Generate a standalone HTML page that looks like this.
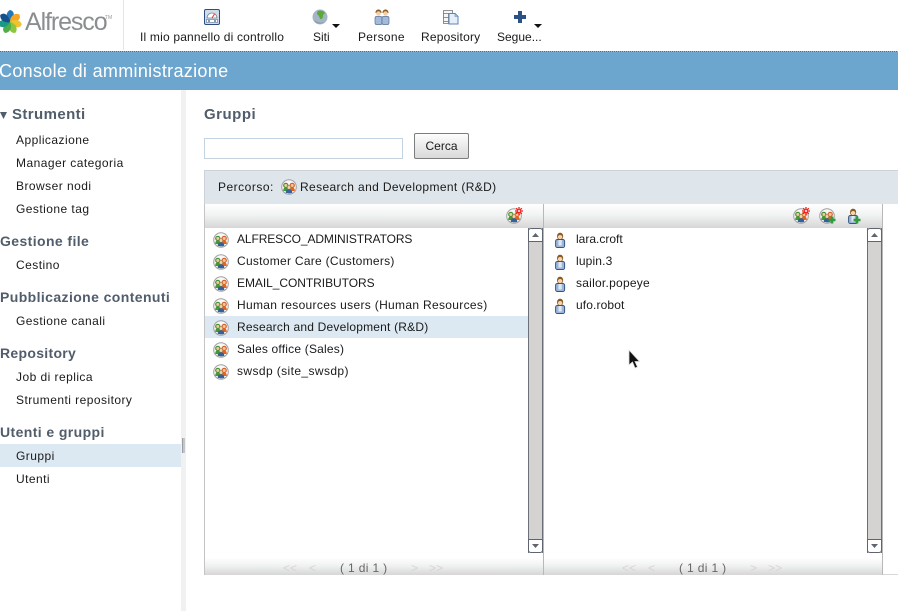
<!DOCTYPE html>
<html><head><meta charset="utf-8">
<style>
html,body{margin:0;padding:0;background:#fff}
body{width:898px;height:611px;overflow:hidden;position:relative;font-family:"Liberation Sans",Arial,sans-serif;font-size:12px;color:#1a1a1a}
.a{position:absolute;white-space:nowrap}
.t{position:absolute;white-space:nowrap;line-height:14px}
.n{letter-spacing:.45px}
.h{position:absolute;white-space:nowrap;font-weight:bold;font-size:14px;line-height:16px;color:#515d6b;left:0;letter-spacing:.4px}
svg{position:absolute;overflow:visible}
.grad{background:linear-gradient(to bottom,#fff 0%,#f2f3f3 45%,#d6d6d6 100%)}
.sb{position:absolute;width:15px;background:#d4d3d1;border-left:1px solid #6b7078;border-right:1px solid #6b7078;box-sizing:border-box}
.sbb{position:absolute;width:15px;height:14px;background:#fff;border:1px solid #5f6570;box-sizing:border-box}
</style></head>
<body>
<svg width="0" height="0" style="position:absolute">
<defs>
<symbol id="grp" viewBox="0 0 16 16">
<circle cx="8" cy="8" r="7.300" fill="#f7f7f7" stroke="#a0a0a0" stroke-width="1"/>
<circle cx="4.800" cy="6.400" r="2.100" fill="#f0c8a0" stroke="#3f8f30" stroke-width="1.100"/>
<circle cx="11.200" cy="6.400" r="2.100" fill="#f0c8a0" stroke="#d9581e" stroke-width="1.100"/>
<path d="M2.200 12c0-2.600 1-3.600 2.600-3.600S7.500 9.400 7.500 12z" fill="#439a32"/>
<path d="M8.500 12c0-2.600 1.100-3.600 2.700-3.600s2.600 1 2.600 3.600z" fill="#e0661f"/>
<circle cx="8" cy="8.500" r="1.800" fill="#f3d2b0" stroke="#a5752f" stroke-width=".7"/>
<path d="M4.700 13.800c0-2.600 1.400-3.400 3.300-3.400s3.300.8 3.300 3.400c-1.900.8-4.700.8-6.600 0z" fill="#33609f"/>
</symbol>
<symbol id="usr" viewBox="0 0 14 16">
<path d="M4 4.800c0-2.700 1.300-4 3.100-4s3.100 1.300 3.100 4z" fill="#8a5a1e"/>
<ellipse cx="7.100" cy="5.100" rx="2.600" ry="2.400" fill="#f4d4b4" stroke="#8a5a1e" stroke-width=".7"/>
<rect x="2.600" y="7.500" width="9" height="8" rx="1.800" fill="#9db6d8" stroke="#36557f" stroke-width="1"/>
<rect x="5.500" y="8" width="3.200" height="5.500" fill="#dfe9f4"/>
</symbol>
<symbol id="star" viewBox="0 0 8 8">
<path d="M4 0v8M0 4h8M1.200 1.200l5.600 5.600M6.800 1.200L1.200 6.800" stroke="#f01c18" stroke-width="1.300" fill="none"/>
<circle cx="4" cy="4" r="1" fill="#fff"/>
</symbol>
<symbol id="plus" viewBox="0 0 8 8">
<path d="M4 .5v7M.5 4h7" stroke="#2f9a3e" stroke-width="2.600" fill="none"/>
</symbol>
</defs>
</svg>

<!-- Header -->
<svg style="left:-2px;top:9px" width="24" height="26" viewBox="0 0 24 26">
<circle cx="12" cy="13" r="5" fill="#dfeee0"/>
<g transform="translate(12 13)">
<path d="M0 0C-5-4-4-10 0-12C5-11 5-5 0 0z" transform="rotate(0)" fill="#2277bb"/>
<path d="M0 0C-5-4-4-10 0-12C5-11 5-5 0 0z" transform="rotate(51)" fill="#f5a623"/>
<path d="M0 0C-5-4-4-10 0-12C5-11 5-5 0 0z" transform="rotate(102)" fill="#f2c12e"/>
<path d="M0 0C-5-4-4-10 0-12C5-11 5-5 0 0z" transform="rotate(153)" fill="#8cc63f"/>
<path d="M0 0C-5-4-4-10 0-12C5-11 5-5 0 0z" transform="rotate(204)" fill="#4fae48"/>
<path d="M0 0C-5-4-4-10 0-12C5-11 5-5 0 0z" transform="rotate(255)" fill="#1a9a86"/>
<path d="M0 0C-5-4-4-10 0-12C5-11 5-5 0 0z" transform="rotate(306)" fill="#14508c"/>
</g>
</svg>
<div class="a" style="left:25px;top:7px;font-size:25px;line-height:30px;color:#8b8e91;letter-spacing:-1.100px">Alfresco</div>
<div class="a" style="left:105px;top:15px;font-size:5px;line-height:6px;color:#999">TM</div>
<div class="a" style="left:123px;top:0;width:1px;height:50px;background:#e6e6e6"></div>

<svg style="left:204px;top:9px" width="16" height="16" viewBox="0 0 16 16">
<rect x=".5" y=".5" width="15" height="15" rx="1.500" fill="#cfdcec" stroke="#2c4d80"/>
<path d="M3 9a5 5 0 0 1 10 0z" fill="#fff" stroke="#7a8794" stroke-width=".8"/>
<path d="M8 9l2.500-4" stroke="#d8402c" stroke-width="1"/>
<rect x="2.500" y="10.500" width="11" height="3" fill="#fff" stroke="#5a7299" stroke-width=".6"/>
<circle cx="5" cy="12" r=".9" fill="#33507e"/><circle cx="11" cy="12" r=".9" fill="#33507e"/>
</svg>
<div class="t" style="left:140px;top:30px;letter-spacing:.19px">Il mio pannello di controllo</div>

<svg style="left:312px;top:9px" width="16" height="16" viewBox="0 0 16 16">
<circle cx="8" cy="8" r="7.500" fill="#a4b5c6"/>
<path d="M6 2c3-1 6 .5 7 2-1 1.500-2 .8-2 3s-1.500 3.500-2.500 3-1-3-2.500-4-1-3 0-4z" fill="#5ca838"/>
<path d="M2 11c3 3 8 4 11 1-3 4-9 3-11-1z" fill="#7b8ca0"/>
</svg>
<div class="t" style="left:313px;top:30px">Siti</div>
<svg style="left:332px;top:24px" width="8" height="4"><path d="M0 0h8L4 4z" fill="#111"/></svg>

<svg style="left:374px;top:9px" width="16" height="16" viewBox="0 0 16 16">
<path d="M1.500 4C1.500 1.500 3 .5 4.500.5S7.500 1.500 7.500 4zM8.500 4c0-2.500 1.500-3.500 3-3.500s3 1 3 3.500z" fill="#8a5a1e"/>
<circle cx="4.500" cy="4.500" r="2.300" fill="#f2cda8"/><circle cx="11.500" cy="4.500" r="2.300" fill="#f2cda8"/>
<rect x="1" y="7.500" width="7" height="8" rx="1.500" fill="#a4bad6" stroke="#526f98" stroke-width=".7"/>
<rect x="8" y="7.500" width="7" height="8" rx="1.500" fill="#a4bad6" stroke="#526f98" stroke-width=".7"/>
</svg>
<div class="t" style="left:358px;top:30px;letter-spacing:.3px">Persone</div>

<svg style="left:443px;top:9px" width="16" height="16" viewBox="0 0 16 16">
<path d="M.5 1.500h9v3h-9zM.5 4.500h5v4h-5zM.5 8.500h5v4h-5zM.5 12.500h5v2h-5z" fill="#f6f6f6" stroke="#6f7376" stroke-width=".8"/>
<path d="M6 4.500h6l3 3v7.500H6z" fill="#e6eef7" stroke="#5d85bb"/>
<path d="M12 4.500v3h3z" fill="#b9cfe8" stroke="#5d85bb" stroke-width=".6"/>
</svg>
<div class="t" style="left:421px;top:30px;letter-spacing:.2px">Repository</div>

<svg style="left:514px;top:11px" width="12" height="12" viewBox="0 0 12 12"><path d="M4 0h4v4h4v4H8v4H4V8H0V4h4z" fill="#2c5184"/></svg>
<div class="t" style="left:497px;top:30px">Segue...</div>
<svg style="left:534px;top:24px" width="8" height="4"><path d="M0 0h8L4 4z" fill="#111"/></svg>

<div class="a" style="left:0;top:51px;width:898px;height:1px;background:repeating-linear-gradient(to right,#5e6a72 0 1px,#a9b4bb 1px 2px)"></div>
<div class="a" style="left:0;top:52px;width:898px;height:38px;background:#6ca5ce"></div>
<div class="a" style="left:-1px;top:60px;font-size:18px;line-height:22px;color:#fff;letter-spacing:.32px">Console di amministrazione</div>

<!-- Sidebar -->
<div class="a" style="left:181px;top:90px;width:5px;height:521px;background:#f1f1f1"></div>
<div class="a" style="left:182px;top:438px;width:3px;height:15px;background:#c4c7ca;border-left:1px solid #9a9ea3;box-sizing:border-box"></div>
<svg style="left:0;top:112px" width="7" height="8"><path d="M0 0h7L3.500 7z" fill="#515d6b"/></svg>
<div class="a" style="left:12px;top:106px;font-weight:bold;font-size:15px;line-height:17px;color:#515d6b;letter-spacing:.4px">Strumenti</div>
<div class="t n" style="left:16px;top:133px">Applicazione</div>
<div class="t n" style="left:16px;top:156px">Manager categoria</div>
<div class="t n" style="left:16px;top:179px">Browser nodi</div>
<div class="t n" style="left:16px;top:202px">Gestione tag</div>
<div class="h" style="top:233px">Gestione file</div>
<div class="t n" style="left:16px;top:258px">Cestino</div>
<div class="h" style="top:289px">Pubblicazione contenuti</div>
<div class="t n" style="left:16px;top:314px">Gestione canali</div>
<div class="h" style="top:345px;letter-spacing:.3px">Repository</div>
<div class="t n" style="left:16px;top:370px">Job di replica</div>
<div class="t n" style="left:16px;top:393px">Strumenti repository</div>
<div class="h" style="top:424px">Utenti e gruppi</div>
<div class="a" style="left:0;top:444px;width:181px;height:23px;background:#dce9f2"></div>
<div class="t n" style="left:16px;top:449px">Gruppi</div>
<div class="t n" style="left:16px;top:472px">Utenti</div>

<!-- Main -->
<div class="a" style="left:204px;top:106px;font-weight:bold;font-size:15px;line-height:18px;color:#515d6b;letter-spacing:.5px">Gruppi</div>
<div class="a" style="left:204px;top:138px;width:199px;height:21px;border:1px solid #c3d3e2;box-sizing:border-box;background:#fff"></div>
<div class="a" style="left:414px;top:133px;width:55px;height:26px;box-sizing:border-box;border:1px solid #7d7d7d;border-radius:2px;background:linear-gradient(to bottom,#fdfdfd,#d9d9d9);text-align:center;line-height:25px">Cerca</div>

<div class="a" style="left:204px;top:170px;width:694px;height:34px;box-sizing:border-box;background:#dee6ec;border-top:1px solid #ccd2d7;border-left:1px solid #ccd2d7"></div>
<div class="t" style="left:218px;top:180px;letter-spacing:.5px">Percorso:</div>
<svg style="left:281px;top:179px" width="16" height="16"><use href="#grp"/></svg>
<div class="t" style="left:300px;top:180px;letter-spacing:.37px">Research and Development (R&amp;D)</div>

<!-- columns -->
<div class="a grad" style="left:204px;top:204px;width:678px;height:24px"></div>
<div class="a" style="left:204px;top:204px;width:1px;height:371px;background:#c4c4c4"></div>
<div class="a" style="left:543px;top:204px;width:1px;height:371px;background:#b8b8b8"></div>
<div class="a" style="left:882px;top:204px;width:1px;height:371px;background:#b8b8b8"></div>
<div class="a" style="left:883px;top:574px;width:15px;height:1px;background:#d8d8d8"></div>

<svg style="left:506px;top:208px" width="16" height="16"><use href="#grp"/></svg>
<svg style="left:515px;top:207px" width="8" height="8"><use href="#star"/></svg>

<svg style="left:793px;top:208px" width="16" height="16"><use href="#grp"/></svg>
<svg style="left:802px;top:207px" width="8" height="8"><use href="#star"/></svg>
<svg style="left:819px;top:208px" width="16" height="16"><use href="#grp"/></svg>
<svg style="left:828px;top:216px" width="8" height="8"><use href="#plus"/></svg>
<svg style="left:846px;top:208px" width="14" height="16"><use href="#usr"/></svg>
<svg style="left:853px;top:216px" width="8" height="8"><use href="#plus"/></svg>

<!-- left list -->
<div class="a" style="left:205px;top:316px;width:323px;height:22px;background:#dce9f2"></div>
<svg style="left:213px;top:232px" width="16" height="16"><use href="#grp"/></svg>
<div class="t" style="left:237px;top:232px;letter-spacing:-.1px">ALFRESCO_ADMINISTRATORS</div>
<svg style="left:213px;top:254px" width="16" height="16"><use href="#grp"/></svg>
<div class="t" style="left:237px;top:254px;letter-spacing:.28px">Customer Care (Customers)</div>
<svg style="left:213px;top:276px" width="16" height="16"><use href="#grp"/></svg>
<div class="t" style="left:237px;top:276px;letter-spacing:-.05px">EMAIL_CONTRIBUTORS</div>
<svg style="left:213px;top:298px" width="16" height="16"><use href="#grp"/></svg>
<div class="t" style="left:237px;top:298px;letter-spacing:.32px">Human resources users (Human Resources)</div>
<svg style="left:213px;top:320px" width="16" height="16"><use href="#grp"/></svg>
<div class="t" style="left:237px;top:320px;letter-spacing:.2px">Research and Development (R&amp;D)</div>
<svg style="left:213px;top:342px" width="16" height="16"><use href="#grp"/></svg>
<div class="t" style="left:237px;top:342px;letter-spacing:.2px">Sales office (Sales)</div>
<svg style="left:213px;top:364px" width="16" height="16"><use href="#grp"/></svg>
<div class="t" style="left:237px;top:364px;letter-spacing:.4px">swsdp (site_swsdp)</div>

<!-- right list -->
<svg style="left:553px;top:232px" width="14" height="16"><use href="#usr"/></svg>
<div class="t" style="left:576px;top:232px">lara.croft</div>
<svg style="left:553px;top:254px" width="14" height="16"><use href="#usr"/></svg>
<div class="t" style="left:576px;top:254px;letter-spacing:.15px">lupin.3</div>
<svg style="left:553px;top:276px" width="14" height="16"><use href="#usr"/></svg>
<div class="t" style="left:576px;top:276px;letter-spacing:.25px">sailor.popeye</div>
<svg style="left:553px;top:298px" width="14" height="16"><use href="#usr"/></svg>
<div class="t" style="left:576px;top:298px;letter-spacing:.12px">ufo.robot</div>

<!-- scrollbars -->
<div class="sb" style="left:528px;top:228px;height:325px"></div>
<div class="sbb" style="left:528px;top:228px;border-radius:3px 3px 0 0"></div>
<svg style="left:532px;top:233px" width="7" height="4"><path d="M0 4h7L3.500 0z" fill="#5f6570"/></svg>
<div class="sbb" style="left:528px;top:539px;border-radius:0 0 3px 3px"></div>
<svg style="left:532px;top:544px" width="7" height="4"><path d="M0 0h7L3.500 4z" fill="#5f6570"/></svg>

<div class="sb" style="left:867px;top:228px;height:325px"></div>
<div class="sbb" style="left:867px;top:228px;border-radius:3px 3px 0 0"></div>
<svg style="left:871px;top:233px" width="7" height="4"><path d="M0 4h7L3.500 0z" fill="#5f6570"/></svg>
<div class="sbb" style="left:867px;top:539px;border-radius:0 0 3px 3px"></div>
<svg style="left:871px;top:544px" width="7" height="4"><path d="M0 0h7L3.500 4z" fill="#5f6570"/></svg>

<!-- pagination -->
<div class="a" style="left:205px;top:558px;width:338px;height:17px;background:linear-gradient(to bottom,#fff,#f0f1f1 45%,#d6d6d6)"></div>
<div class="a" style="left:544px;top:558px;width:338px;height:17px;background:linear-gradient(to bottom,#fff,#f0f1f1 45%,#d6d6d6)"></div>
<div class="t" style="left:283px;top:561px;color:#d4d4d4">&lt;&lt;</div>
<div class="t" style="left:309px;top:561px;color:#d4d4d4">&lt;</div>
<div class="t" style="left:340px;top:561px;color:#666;letter-spacing:.35px">( 1 di 1 )</div>
<div class="t" style="left:411px;top:561px;color:#d4d4d4">&gt;</div>
<div class="t" style="left:429px;top:561px;color:#d4d4d4">&gt;&gt;</div>
<div class="t" style="left:622px;top:561px;color:#d4d4d4">&lt;&lt;</div>
<div class="t" style="left:648px;top:561px;color:#d4d4d4">&lt;</div>
<div class="t" style="left:679px;top:561px;color:#666;letter-spacing:.35px">( 1 di 1 )</div>
<div class="t" style="left:750px;top:561px;color:#d4d4d4">&gt;</div>
<div class="t" style="left:768px;top:561px;color:#d4d4d4">&gt;&gt;</div>

<!-- cursor -->
<svg style="left:628px;top:350px" width="13" height="20" viewBox="0 0 13 20">
<path d="M1 0v15l3.500-3 2.500 6 2.500-1-2.500-5.500H11.500z" fill="#111" stroke="#ddd" stroke-width=".8"/>
</svg>
</body></html>
